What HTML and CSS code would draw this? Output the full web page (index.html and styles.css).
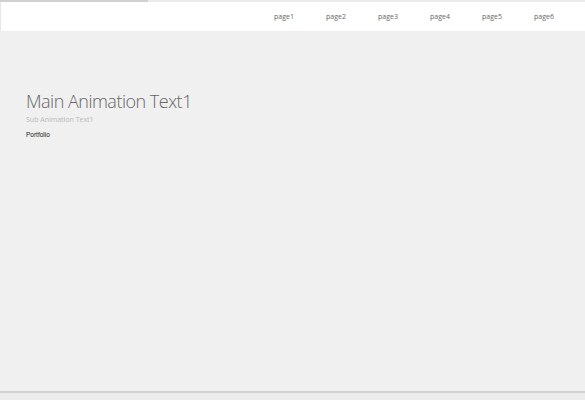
FILE: index.html
```html
<!DOCTYPE html>
<html>
<head>
<meta charset="utf-8">
<link rel="stylesheet" href="styles.css">
</head>
<body>
<div class="progress"><div class="progress-fill"></div></div>
<header class="header">
  <nav class="nav">
    <a class="nav-link">page1</a>
    <a class="nav-link">page2</a>
    <a class="nav-link">page3</a>
    <a class="nav-link">page4</a>
    <a class="nav-link">page5</a>
    <a class="nav-link">page6</a>
  </nav>
</header>
<main class="hero">
  <h1 class="hero-title">Main Animation Text1</h1>
  <p class="hero-sub">Sub Animation Text1</p>
  <p class="hero-link">Portfolio</p>
</main>
<footer class="footer"></footer>
</body>
</html>
```
FILE: styles.css
```css
* { box-sizing: border-box; }
html, body { margin: 0; padding: 0; }
body {
  width: 585px;
  height: 400px;
  background: #f0f0f0;
  font-family: "Open Sans", sans-serif;
  display: flex;
  flex-direction: column;
  overflow: hidden;
}
.progress {
  height: 2px;
  background: #ebebeb;
}
.progress-fill {
  width: 148px;
  height: 2px;
  background: #d0d0d0;
}
.header {
  height: 29px;
  background: #ffffff;
  border-left: 1px solid #e6e6e6;
  display: flex;
  justify-content: flex-end;
  align-items: center;
}
.nav {
  display: flex;
  padding-right: 15px;
}
.nav-link {
  width: 52px;
  text-align: center;
  font-size: 7px;
  color: #666666;
}
.hero {
  flex: 1;
  padding: 58px 26px 0;
}
.hero-title {
  margin: 0;
  font-weight: 300;
  font-size: 18px;
  letter-spacing: -0.5px;
  line-height: 24px;
  color: #666;
}
.hero-sub {
  margin: 2px 0 0;
  font-size: 7px;
  line-height: 10px;
  color: #b8b8b8;
}
.hero-link {
  margin: 5px 0 0;
  font-family: "Liberation Sans", Arial, sans-serif;
  font-size: 6.5px;
  line-height: 9px;
  color: #222;
}
.footer {
  height: 9px;
  border-top: 2px solid #d2d2d2;
  background: #ececec;
}
```
